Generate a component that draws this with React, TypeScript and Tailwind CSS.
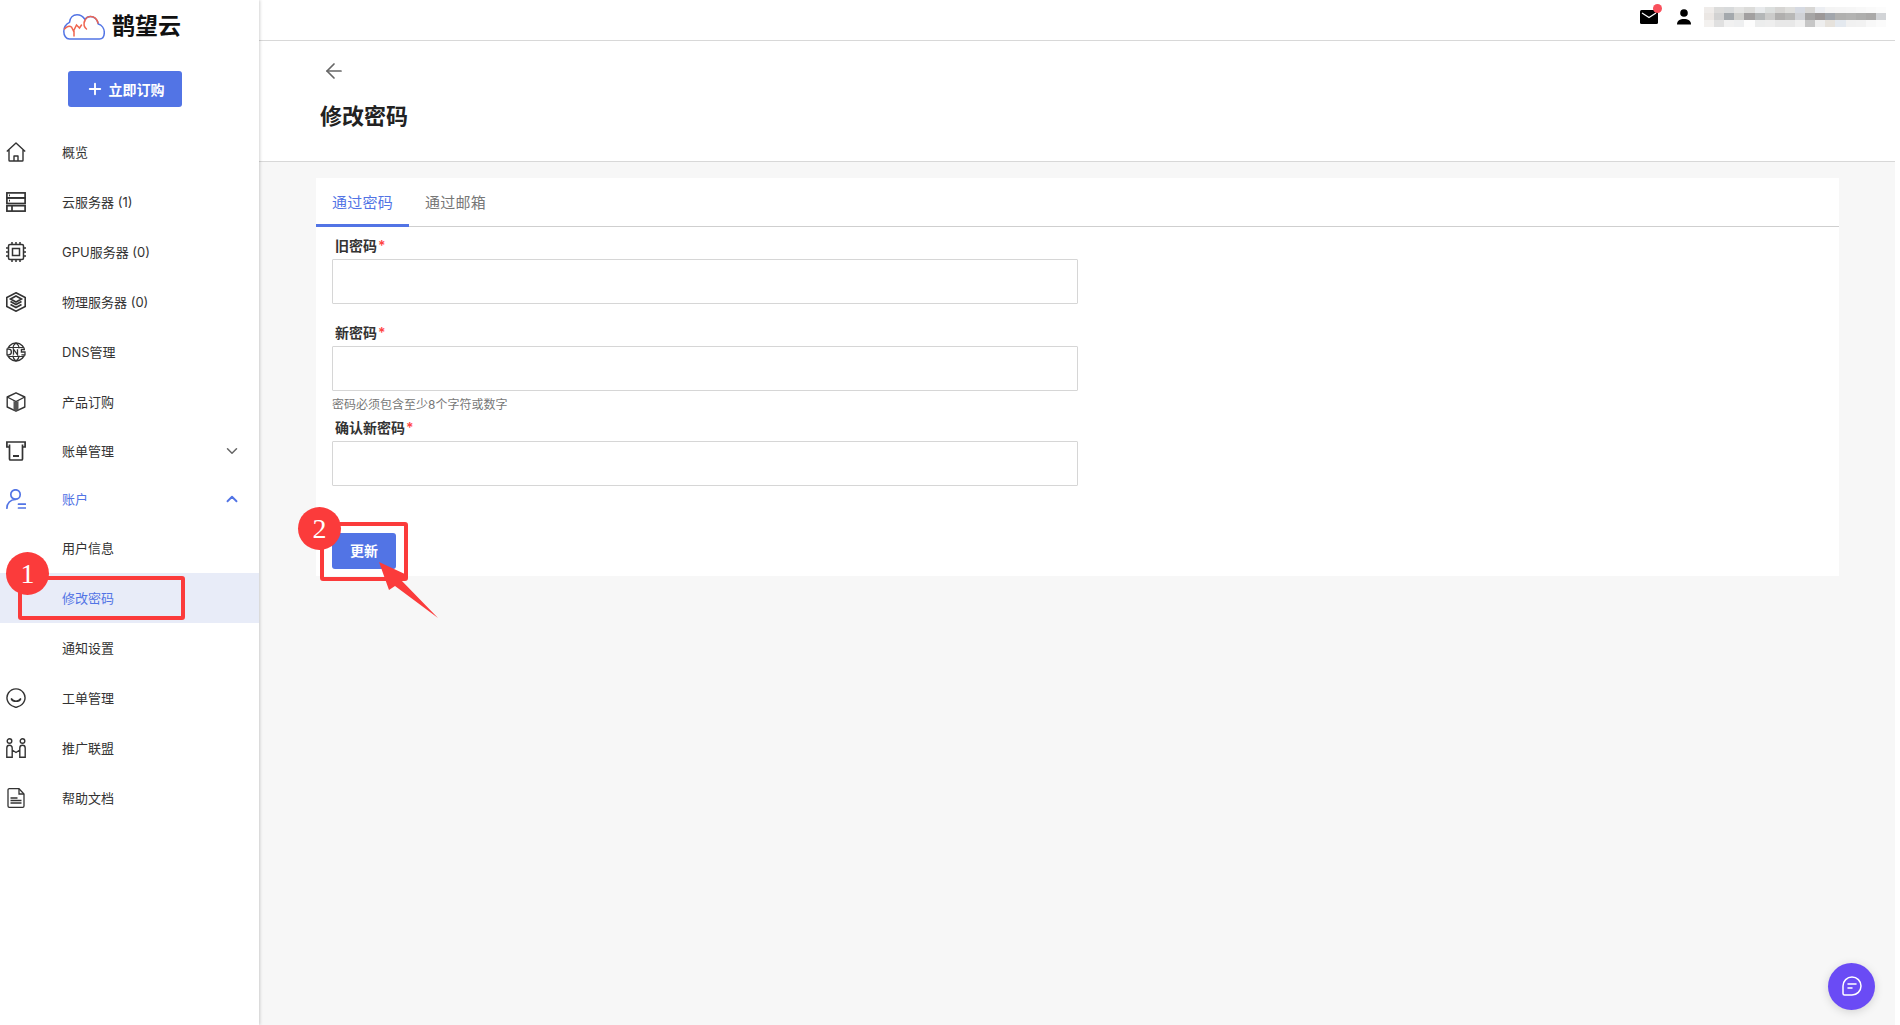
import React from 'react';
import { ArrowLeft, ChevronDown, ChevronUp, Plus } from 'lucide-react';

const font = 'font-["Inter","Noto_Sans_CJK_SC",sans-serif]';

const Home = () => (
  <svg viewBox="0 0 20 20" className="h-5 w-5" fill="none" stroke="#333" strokeWidth="1.4">
    <path d="M.8 9.500 10 1l9.200 8.500M3 8v10.200c0 .5.300.8.800.8h12.400c.5 0 .8-.3.800-.8V8M8 19v-5h4v5" strokeLinejoin="round" />
  </svg>
);

const Servers = () => (
  <svg viewBox="0 0 20 20" className="h-5 w-5" fill="none" stroke="#333" strokeWidth="1.7">
    <rect x="0.900" y="0.900" width="18.200" height="5" />
    <rect x="0.900" y="5.900" width="18.200" height="5.600" />
    <rect x="0.900" y="13.700" width="18.200" height="5.400" />
    <path d="M6 13.700v5.400M3 3.400h1M3 8.700h1" />
  </svg>
);

const Chip = () => (
  <svg viewBox="0 0 20 20" className="h-5 w-5" fill="none" stroke="#333" strokeWidth="1.500">
    <rect x="2.500" y="2.500" width="15" height="15" rx="1.500" />
    <rect x="6.500" y="6.500" width="7" height="7" />
    <path d="M0 6h2.500M0 10h2.500M0 14h2.500M17.500 6H20M17.500 10H20M17.500 14H20M6 0v2.500M10 0v2.500M14 0v2.500M6 17.500V20M10 17.500V20M14 17.500V20" />
  </svg>
);

const Stack = () => (
  <svg viewBox="0 0 20 20" className="h-5 w-5" fill="none" stroke="#333" strokeWidth="1.600">
    <path d="M10 .8 19.200 5.500v9L10 19.200.8 14.500v-9z" />
    <path d="m10 4 5.500 3L10 10 4.500 7zM4.500 9.500 10 12.500l5.500-3M4.500 12.500 10 15.500l5.500-3" />
  </svg>
);

const Dns = () => (
  <svg viewBox="0 0 20 20" className="h-5 w-5" fill="none" stroke="#333">
    <circle cx="10" cy="10" r="9" strokeWidth="1.400" />
    <path d="M10 1c-3 2-3 3.500-3 5.500M10 1c3 2 3 3.500 3 5.500M10 19c-3-2-3-3.500-3-5.500M10 19c3-2 3-3.500 3-5.500M2 5.500h16M2 14.500h16" strokeWidth="1.200" />
    <rect x="0" y="6.800" width="20" height="6.400" fill="#fff" stroke="none" />
    <path d="M1 7.200v5.600h1.600a2.800 2.800 0 0 0 0-5.600zM7.500 12.800V7.200l4 5.600V7.200M19 7.500h-3.600v2.500H19v2.800h-3.600" strokeWidth="1.300" />
  </svg>
);

const Box = () => (
  <svg viewBox="0 0 20 20" className="h-5 w-5" fill="none" stroke="#333" strokeWidth="1.400">
    <path d="M10 .8 18.800 5v10L10 19.200 1.200 15V5z" strokeLinejoin="round" />
    <path d="M1.200 5 10 9.500 18.800 5" />
    <path d="M7.500 9v9.500h5V9L10 10z" fill="#555" stroke="none" />
  </svg>
);

const Bill = () => (
  <svg viewBox="0 0 20 20" className="h-5 w-5" fill="none" stroke="#333" strokeWidth="1.700">
    <path d="M3.500 6H.9V1h18.200v5h-2.600" />
    <path d="M3.500 3.500V18c0 .5.500 1 1 1h11c.5 0 1-.5 1-1V3.500" />
    <path d="M7 15h6" strokeWidth="2" />
  </svg>
);

const Account = () => (
  <svg viewBox="0 0 20 20" className="h-5 w-5" fill="none" stroke="#5274e5" strokeWidth="1.700" strokeLinecap="round">
    <circle cx="9.500" cy="5.500" r="4.700" />
    <path d="M.9 19.200c0-5 3.500-8.700 8.600-8.700M12.500 15.200h7M12.500 19h7" />
  </svg>
);

const Ticket = () => (
  <svg viewBox="0 0 20 20" className="h-5 w-5" fill="none" stroke="#333" strokeWidth="1.400">
    <path d="M10 19.500 8 18.600a9 9 0 1 1 4 0z" strokeLinejoin="round" />
    <path d="M5.500 11c1.500 3 7.500 3 9 0" strokeWidth="1.700" strokeLinecap="round" />
  </svg>
);

const Partners = () => (
  <svg viewBox="0 0 20 20" className="h-5 w-5" fill="none" stroke="#333" strokeWidth="1.400">
    <circle cx="3.500" cy="3" r="2.300" />
    <circle cx="16.500" cy="3" r="2.300" />
    <path d="M.8 19.200V10a2.700 2.700 0 0 1 5.400 0v9.200zM13.800 19.200V10a2.700 2.700 0 0 1 5.400 0v9.200zM6.200 12l3.800 2.500 3.800-2.500" />
  </svg>
);

const Doc = () => (
  <svg viewBox="0 0 20 20" className="h-5 w-5" fill="none" stroke="#333" strokeWidth="1.300">
    <path d="M2 2a1.300 1.300 0 0 1 1.300-1.300h9.700L18 6v12a1.300 1.300 0 0 1-1.300 1.300H3.300A1.300 1.300 0 0 1 2 18z" />
    <path d="M13 1v5h5M4.500 10h7M4.500 12.500h11M4.500 15h11" />
  </svg>
);

const Logo = () => (
  <svg viewBox="0 0 42 26" className="h-[26px] w-[42px]" fill="none" strokeWidth="1.500" strokeLinecap="round">
    <path d="M6.500 25h30c3.500 0 4.800-3.500 4.800-6.500 0-4-2.500-7.500-6-8.500C34.500 5.500 31 2.500 27.500 2.500c-2.500 0-4.500 1.300-5.500 3C20 2.500 17 .8 14 .8c-4 0-7 3-7.500 7.500C3 10 .8 13.500.8 17.500c0 4 2.200 7.500 5.700 7.500z" stroke="#5274e5" />
    <path d="M1.500 15c2-2.500 5-3.500 7-2l2 4 3-6 3 3 2-3M11 17v5M21.500 7c-1 3-.5 6 2 8" stroke="#f0654f" />
    <path d="M21.500 8c.5-3 3-5.500 6-5.500 3.500 0 6.500 2.500 7.500 6.500" stroke="#f0654f" />
  </svg>
);

const mosaic = [
  ['#efecea', '#dcdcdb', '#d8dadb', '#e4e4e3', '#dcdcda', '#e8eaec', '#dcdfde', '#d6d5d3', '#dfdfdd', '#d6dae2', '#d8d7d5', '#eceef2', '#f4f4f4', '#f5f5f5', '#f6f6f6', '#f8f8f8', '#fafafa', '#fcfcfc'],
  ['#ebe7e4', '#d2d2d2', '#a4a9ad', '#d0d0cd', '#a2a0a0', '#b4b7b8', '#cbcbca', '#b0afae', '#b8b8b7', '#d0d2d6', '#a6a5a5', '#9c9898', '#a2a6ac', '#b0b0af', '#b3b3b2', '#aeaead', '#aaa9a8', '#d2d4d7'],
  ['#f3f1ef', '#e0e0e0', '#f1f1f1', '#eeeff0', '#fdfdfd', '#eceded', '#eeeeee', '#e8e8e8', '#e8e8e8', '#f0f0f0', '#c6c6c6', '#eeeeee', '#e6e2dc', '#e4e9ef', '#f1f1f1', '#f2f2f2', '#f8f8f8', '#fbfbfb'],
];

const items = [
  { icon: <Home />, label: '概览' },
  { icon: <Servers />, label: '云服务器 (1)' },
  { icon: <Chip />, label: 'GPU服务器 (0)' },
  { icon: <Stack />, label: '物理服务器 (0)' },
  { icon: <Dns />, label: 'DNS管理' },
  { icon: <Box />, label: '产品订购' },
];

const bottomItems = [
  { icon: <Ticket />, label: '工单管理' },
  { icon: <Partners />, label: '推广联盟' },
  { icon: <Doc />, label: '帮助文档' },
];

function Row({ icon, label, className = '', children }: { icon?: React.ReactNode; label: string; className?: string; children?: React.ReactNode }) {
  return (
    <div className={`flex h-[50px] items-center pl-[6px] pr-[18px] text-[13px] ${className}`}>
      <span className="flex w-[56px] shrink-0 items-center">{icon}</span>
      <span className="flex-1 whitespace-nowrap pt-[2px]">{label}</span>
      {children}
    </div>
  );
}

function Field({ label, className = '' }: { label: string; className?: string }) {
  return (
    <div className={className}>
      <label className="block h-[17px] pl-[3px] text-[14px] font-semibold leading-[17px] text-[#333]">
        {label}
        <span className="ml-[1px] text-[#f44]">*</span>
      </label>
      <input type="password" className="mt-[5px] block h-[45px] w-[746px] rounded-[1px] border border-[#d6d6d6] bg-white" />
    </div>
  );
}

export default function App() {
  return (
    <div className={`relative flex h-[1025px] w-[1900px] overflow-hidden bg-[#f7f7f7] ${font}`}>
      <aside className="z-10 h-full w-[259px] shrink-0 bg-white text-[#333] shadow-[1px_0_3px_rgba(0,0,0,0.18)]">
        <div className="flex h-[54px] items-center pb-[1px] pl-[63px]">
          <Logo />
          <span className="ml-[7px] text-[23px] font-bold leading-none text-[#111]">鹊望云</span>
        </div>
        <div className="pl-[68px] pt-[17px]">
          <button className="flex h-[36px] w-[114px] items-center justify-center gap-[5px] rounded-[3px] bg-[#5274e5] text-[14px] font-semibold text-white">
            <Plus className="h-[18px] w-[18px]" strokeWidth={2.500} />
            立即订购
          </button>
        </div>
        <div className="mt-[20px]">
          {items.map((item) => (
            <Row key={item.label} icon={item.icon} label={item.label} />
          ))}
          <Row icon={<Bill />} label="账单管理" className="!h-[48px]">
            <ChevronDown className="h-[18px] w-[18px] text-[#666]" />
          </Row>
          <Row icon={<Account />} label="账户" className="!h-[48px] text-[#5274e5]">
            <ChevronUp className="h-[18px] w-[18px] text-[#5274e5]" strokeWidth={2.500} />
          </Row>
          <Row label="用户信息" />
          <Row label="修改密码" className="bg-[#e8ecf8] text-[#5274e5]" />
          <Row label="通知设置" />
          {bottomItems.map((item) => (
            <Row key={item.label} icon={item.icon} label={item.label} />
          ))}
        </div>
      </aside>

      <main className="flex min-w-0 flex-1 flex-col">
        <header className="flex h-[41px] items-center justify-end border-b border-[#d8d8d8] bg-white pb-[7px] pr-[14px]">
          <div className="relative mr-[19px]">
            <svg viewBox="0 0 18 14" className="h-[14px] w-[18px]">
              <rect width="18" height="14" rx="1.500" fill="#000" />
              <path d="m2 3 7 4.500L16 3" fill="none" stroke="#fff" strokeWidth="1.200" />
            </svg>
            <span className="absolute right-[-4px] top-[-6px] h-[9px] w-[9px] rounded-full bg-[#f9505c]" />
          </div>
          <svg viewBox="0 0 14 16" className="mr-[13px] h-[16px] w-[14px]">
            <circle cx="7" cy="4" r="3.800" fill="#000" />
            <path d="M0 15.500c0-4 3-5.500 7-5.500s7 1.500 7 5.500z" fill="#000" />
          </svg>
          <div className="flex h-[20px] w-[182px] flex-col blur-[0.6px]">
            {mosaic.map((line, i) => (
              <div key={i} className="flex flex-1">
                {line.map((c, j) => (
                  <span key={j} className="flex-1" style={{ backgroundColor: c }} />
                ))}
              </div>
            ))}
          </div>
        </header>

        <div className="h-[121px] border-b border-[#d8d8d8] bg-white pl-[61px]">
          <ArrowLeft className="ml-[2px] mt-[18px] h-[24px] w-[24px] text-[#666]" strokeWidth={1.700} />
          <h1 className="mt-[18px] text-[22px] font-bold leading-[30px] text-[#222]">修改密码</h1>
        </div>

        <section className="ml-[57px] mt-[16px] h-[398px] w-[1523px] bg-white">
          <div className="flex h-[49px] border-b border-[#cfcfcf]">
            <div className="flex h-[49px] w-[93px] items-center justify-center border-b-[3px] border-[#5274e5] pt-[5px] text-[15px] tracking-[0.300px] text-[#5274e5]">
              通过密码
            </div>
            <div className="flex h-[48px] w-[93px] items-center justify-center pt-[3px] text-[15px] tracking-[0.300px] text-[#777]">
              通过邮箱
            </div>
          </div>
          <div className="pl-[16px] pt-[10px]">
            <Field label="旧密码" />
            <Field label="新密码" className="mt-[20px]" />
            <p className="mt-[7px] h-[14px] text-[12px] leading-[14px] text-[#777]">密码必须包含至少8个字符或数字</p>
            <Field label="确认新密码" className="mt-[7px]" />
            <button className="mt-[47px] flex h-[36px] w-[64px] items-center justify-center rounded-[3px] bg-[#5274e5] pb-[2px] text-[14px] font-semibold text-white">
              更新
            </button>
          </div>
        </section>
      </main>

      <div className="absolute right-0 top-0 h-full w-[5px] bg-white" />

      <button className="absolute bottom-[15px] right-[25px] flex h-[47px] w-[47px] items-center justify-center rounded-full bg-[#6a4bf5] shadow-[0_2px_10px_rgba(0,0,0,0.15)]">
        <svg viewBox="0 0 20 20" className="mb-[2px] h-[20px] w-[20px]" fill="none" stroke="#fff" strokeWidth="1.500" strokeLinecap="round">
          <path d="M10 1a9 9 0 0 1 0 18H2.500A1.500 1.500 0 0 1 1 17.500V10a9 9 0 0 1 9-9z" />
          <path d="M6 8h8M6 12h4" />
        </svg>
      </button>

      {/* tutorial markup drawn on top of the screenshot */}
      <div className="absolute left-[18px] top-[576px] z-20 h-[44px] w-[167px] rounded-[3px] border-[4px] border-[#fb3b3b]" />
      <div className="absolute left-[6px] top-[552px] z-20 flex h-[43px] w-[43px] items-center justify-center rounded-full bg-[#fb3b3b] font-['Liberation_Serif',serif] text-[28px] text-white">
        1
      </div>
      <div className="absolute left-[320px] top-[522px] z-20 h-[59px] w-[88px] rounded-[3px] border-[4px] border-[#fb3b3b]" />
      <div className="absolute left-[298px] top-[507px] z-20 flex h-[43px] w-[43px] items-center justify-center rounded-full bg-[#fb3b3b] font-['Liberation_Serif',serif] text-[28px] text-white">
        2
      </div>
      <svg viewBox="0 0 70 70" className="absolute left-[375px] top-[560px] z-20 h-[70px] w-[70px]">
        <path d="M4 2 32 15 26 20 63 58 20 26 14 30z" fill="#fb3b3b" />
      </svg>
    </div>
  );
}
